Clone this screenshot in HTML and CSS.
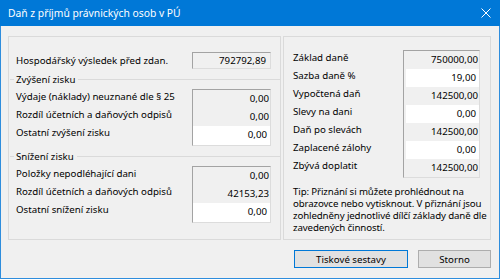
FILE: index.html
```html
<!DOCTYPE html>
<html lang="cs">
<head>
    <meta charset="UTF-8">
    <title>Daň z příjmů právnických osob v PÚ</title>
    <link rel="stylesheet" href="styles.css">
</head>
<body>
    <div class="window">
        <div class="titlebar">
            <span class="title">Daň z příjmů právnických osob v PÚ</span>
            <svg class="close" width="10" height="10" viewBox="0 0 10 10">
                <path d="M0.5 0.5 L9.5 9.5 M9.5 0.5 L0.5 9.5" stroke="#fff" stroke-width="1" fill="none"/>
            </svg>
        </div>
        <div class="content">
            <div class="panels">
                <div class="panel panel-left">
                    <div class="main-row">
                        <span class="label">Hospodářský výsledek před zdan.</span>
                        <div class="field">792792,89</div>
                    </div>

                    <div class="group-title"><span>Zvýšení zisku</span></div>
                    <div class="group">
                        <div class="labels">
                            <div class="label-row">Výdaje (náklady) neuznané dle § 25</div>
                            <div class="label-row">Rozdíl účetních a daňových odpisů</div>
                            <div class="label-row last">Ostatní zvýšení zisku</div>
                        </div>
                        <div class="box">
                            <div class="cell">0,00</div>
                            <div class="cell">0,00</div>
                            <div class="cell edit last">0,00</div>
                        </div>
                    </div>

                    <div class="group-title"><span>Snížení zisku</span></div>
                    <div class="group">
                        <div class="labels">
                            <div class="label-row">Položky nepodléhající dani</div>
                            <div class="label-row">Rozdíl účetních a daňových odpisů</div>
                            <div class="label-row last">Ostatní snížení zisku</div>
                        </div>
                        <div class="box">
                            <div class="cell">0,00</div>
                            <div class="cell">42153,23</div>
                            <div class="cell edit last">0,00</div>
                        </div>
                    </div>
                </div>

                <div class="panel panel-right">
                    <div class="group">
                        <div class="labels">
                            <div class="label-row">Základ daně</div>
                            <div class="label-row">Sazba daně %</div>
                            <div class="label-row">Vypočtená daň</div>
                            <div class="label-row">Slevy na dani</div>
                            <div class="label-row">Daň po slevách</div>
                            <div class="label-row">Zaplacené zálohy</div>
                            <div class="label-row">Zbývá doplatit</div>
                        </div>
                        <div class="box box-tax">
                            <div class="cell">750000,00</div>
                            <div class="cell edit">19,00</div>
                            <div class="cell">142500,00</div>
                            <div class="cell edit">0,00</div>
                            <div class="cell">142500,00</div>
                            <div class="cell edit">0,00</div>
                            <div class="cell">142500,00</div>
                        </div>
                    </div>
                    <p class="tip">Tip: Přiznání si můžete prohlédnout na obrazovce nebo vytisknout. V přiznání jsou zohledněny jednotlivé dílčí základy daně dle zavedených činností.</p>
                </div>
            </div>

            <div class="buttons">
                <button class="btn btn-default">Tiskové sestavy</button>
                <button class="btn btn-cancel">Storno</button>
            </div>
        </div>
    </div>
</body>
</html>
```

FILE: styles.css
```css
* {
    margin: 0;
    padding: 0;
    box-sizing: border-box;
}
html, body {
    width: 500px;
    height: 279px;
    background: #f0f0f0;
    font-family: 'Noto Sans', 'Open Sans', sans-serif;
    font-size: 9.7px;
    color: #000;
    overflow: hidden;
}
.window {
    width: 500px;
    height: 279px;
    border: 1px solid #2e8ddd;
    border-top: none;
    background: #f0f0f0;
}
.titlebar {
    height: 26px;
    margin: 0 -1px;
    background: #0078d7;
    color: #fff;
    display: flex;
    align-items: center;
    justify-content: space-between;
    padding: 0 9px 0 8px;
}
.title {
    font-size: 10.3px;
}
.close {
    display: block;
}

.content {
    padding: 10px 8px 0 7px;
}
.panels {
    display: flex;
    gap: 2px;
    height: 204px;
}
.panel {
    border: 1px solid #dadada;
    height: 100%;
}
.panel-left {
    width: 273px;
    padding: 15px 9px 0 7px;
}
.panel-right {
    flex: 1;
    padding: 13px 10px 0 9px;
}

.main-row {
    display: flex;
    justify-content: space-between;
    align-items: center;
    height: 17px;
}
.field, .box {
    width: 79px;
    border: 1px solid;
    border-color: #a3a3a3 #dcdcdc #dcdcdc #a3a3a3;
}
.field {
    height: 17px;
    text-align: right;
    padding-right: 4px;
    line-height: 15px;
}

.group-title {
    display: flex;
    align-items: center;
    height: 14px;
    margin: 3px -9px 3px -6px;
}
.group-title::before,
.group-title::after {
    content: "";
    height: 1px;
    background: #dadada;
}
.group-title::before {
    width: 4px;
    margin-right: 2px;
}
.group-title::after {
    flex: 1;
    margin-left: 3px;
}

.group {
    display: flex;
    justify-content: space-between;
}
.label-row {
    height: 18px;
    line-height: 16px;
    white-space: nowrap;
}
.label-row.last {
    height: 19px;
}
.cell {
    height: 18px;
    line-height: 17px;
    text-align: right;
    padding-right: 1px;
}
.cell.last {
    height: 19px;
}
.cell.edit {
    background: #fff;
    padding-right: 3px;
}

.box-tax {
    width: 77px;
}
.box-tax .cell.edit {
    margin-left: 2px;
}

.tip {
    margin: 8px -9px 0 0;
    line-height: 12px;
    letter-spacing: -0.12px;
}

.buttons {
    display: flex;
    justify-content: flex-end;
    gap: 10px;
    margin-top: 10px;
}
.btn {
    height: 18px;
    font-family: inherit;
    font-size: 9.7px;
    background: #e1e1e1;
    border: 1px solid #adadad;
    color: #000;
}
.btn-default {
    width: 114px;
    border-color: #0078d7;
}
.btn-cancel {
    width: 73px;
}
```
